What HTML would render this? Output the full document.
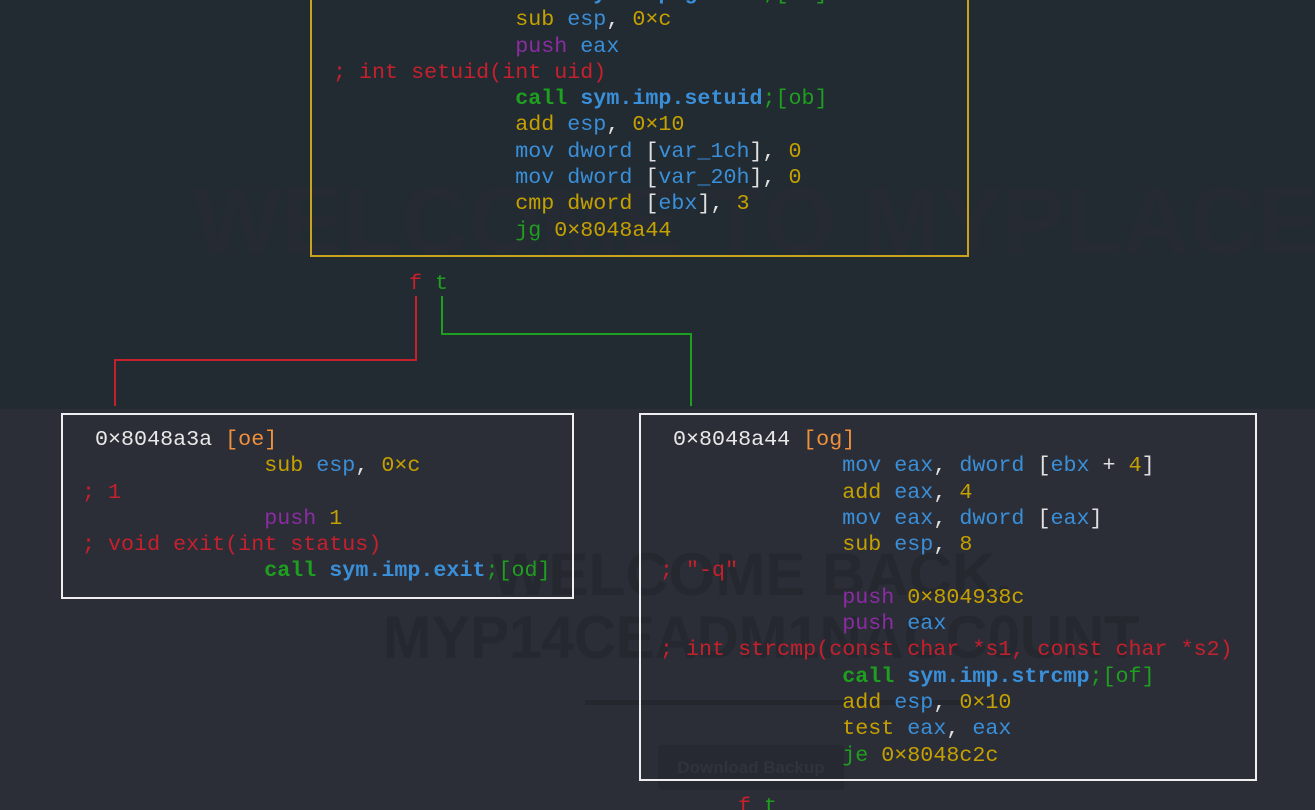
<!DOCTYPE html>
<html><head><meta charset="utf-8"><style>
*{margin:0;padding:0;box-sizing:border-box}
html{overflow:hidden}
body{width:1315px;height:810px;overflow:hidden;background:#2b2e37;position:relative;font-family:"Liberation Mono",monospace}
.top{position:absolute;left:0;top:0;width:1315px;height:409px;background:#222a32}
.wm{position:absolute;font-family:"Liberation Sans",sans-serif;font-weight:bold;color:#272b32;white-space:nowrap;transform-origin:left top}
.box{position:absolute;border:2px solid #eee}
pre{position:absolute;font-family:"Liberation Mono",monospace;font-size:21.7px;line-height:26.3px;white-space:pre;color:#e0e0e0}
.y{color:#c4a000}.b{color:#3a8fd9}.p{color:#8b2ca3}.r{color:#c6202d}.g{color:#1f9f1f}.w{color:#e8e8e8}.o{color:#f0903a}
.bb{font-weight:bold}
.ln{position:absolute}
</style></head><body>
<div class="top"></div>
<div class="wm" style="left:193px;top:167px;font-size:96px;color:#262b33;transform:scaleX(0.975)">WELCOME TO MYPLACE</div>
<div class="wm" style="left:492px;top:540px;font-size:60px;color:#25282f">WELCOME BACK,</div>
<div class="wm" style="left:383px;top:603px;font-size:60px;color:#25282f;transform:scaleX(0.97)">MYP14CEADM1NACC0UNT</div>
<div style="position:absolute;left:585px;top:700px;width:425px;height:5px;background:#24272e"></div>
<div style="position:absolute;left:658px;top:745px;width:186px;height:45px;background:#262932;border-radius:4px;color:#30333c;font-family:'Liberation Sans',sans-serif;font-size:17px;font-weight:bold;text-align:center;line-height:45px">Download Backup</div>

<div class="box" style="left:310px;top:-10px;width:659px;height:267px;border-color:#c9a31c"></div>
<pre style="left:333px;top:-19px"><span class="g bb">              call</span> <span class="b bb">sym.imp.getuid</span><span class="g">;[oa]</span>
              <span class="y">sub</span> <span class="b">esp</span>, <span class="y">0×c</span>
              <span class="p">push</span> <span class="b">eax</span>
<span class="r">; int setuid(int uid)</span>
              <span class="g bb">call</span> <span class="b bb">sym.imp.setuid</span><span class="g">;[ob]</span>
              <span class="y">add</span> <span class="b">esp</span>, <span class="y">0×10</span>
              <span class="b">mov dword</span> [<span class="b">var_1ch</span>], <span class="y">0</span>
              <span class="b">mov dword</span> [<span class="b">var_20h</span>], <span class="y">0</span>
              <span class="y">cmp dword</span> [<span class="b">ebx</span>], <span class="y">3</span>
              <span class="g">jg</span> <span class="y">0×8048a44</span></pre>

<pre style="left:409px;top:271px"><span class="r">f</span> <span class="g">t</span></pre>
<div class="ln" style="left:415px;top:296px;width:2px;height:65px;background:#c6202d"></div>
<div class="ln" style="left:114px;top:359px;width:303px;height:2px;background:#c6202d"></div>
<div class="ln" style="left:114px;top:359px;width:2px;height:47px;background:#c6202d"></div>
<div class="ln" style="left:441px;top:296px;width:2px;height:39px;background:#1f9f1f"></div>
<div class="ln" style="left:441px;top:333px;width:251px;height:2px;background:#1f9f1f"></div>
<div class="ln" style="left:690px;top:333px;width:2px;height:73px;background:#1f9f1f"></div>

<div class="box" style="left:61px;top:413px;width:513px;height:186px"></div>
<pre style="left:82px;top:427px"><span class="w"> 0×8048a3a</span> <span class="o">[oe]</span>
              <span class="y">sub</span> <span class="b">esp</span>, <span class="y">0×c</span>
<span class="r">; 1</span>
              <span class="p">push</span> <span class="y">1</span>
<span class="r">; void exit(int status)</span>
              <span class="g bb">call</span> <span class="b bb">sym.imp.exit</span><span class="g">;[od]</span></pre>

<div class="box" style="left:639px;top:413px;width:618px;height:368px"></div>
<pre style="left:660px;top:427px"><span class="w"> 0×8048a44</span> <span class="o">[og]</span>
              <span class="b">mov eax</span>, <span class="b">dword</span> [<span class="b">ebx</span> + <span class="y">4</span>]
              <span class="y">add</span> <span class="b">eax</span>, <span class="y">4</span>
              <span class="b">mov eax</span>, <span class="b">dword</span> [<span class="b">eax</span>]
              <span class="y">sub</span> <span class="b">esp</span>, <span class="y">8</span>
<span class="r">; "-q"</span>
              <span class="p">push</span> <span class="y">0×804938c</span>
              <span class="p">push</span> <span class="b">eax</span>
<span class="r">; int strcmp(const char *s1, const char *s2)</span>
              <span class="g bb">call</span> <span class="b bb">sym.imp.strcmp</span><span class="g">;[of]</span>
              <span class="y">add</span> <span class="b">esp</span>, <span class="y">0×10</span>
              <span class="y">test</span> <span class="b">eax</span>, <span class="b">eax</span>
              <span class="g">je</span> <span class="y">0×8048c2c</span></pre>
<div style="position:absolute;left:738px;top:794px;height:16px;overflow:hidden"><pre style="position:static"><span class="r">f</span> <span class="g">t</span></pre></div>
</body></html>
